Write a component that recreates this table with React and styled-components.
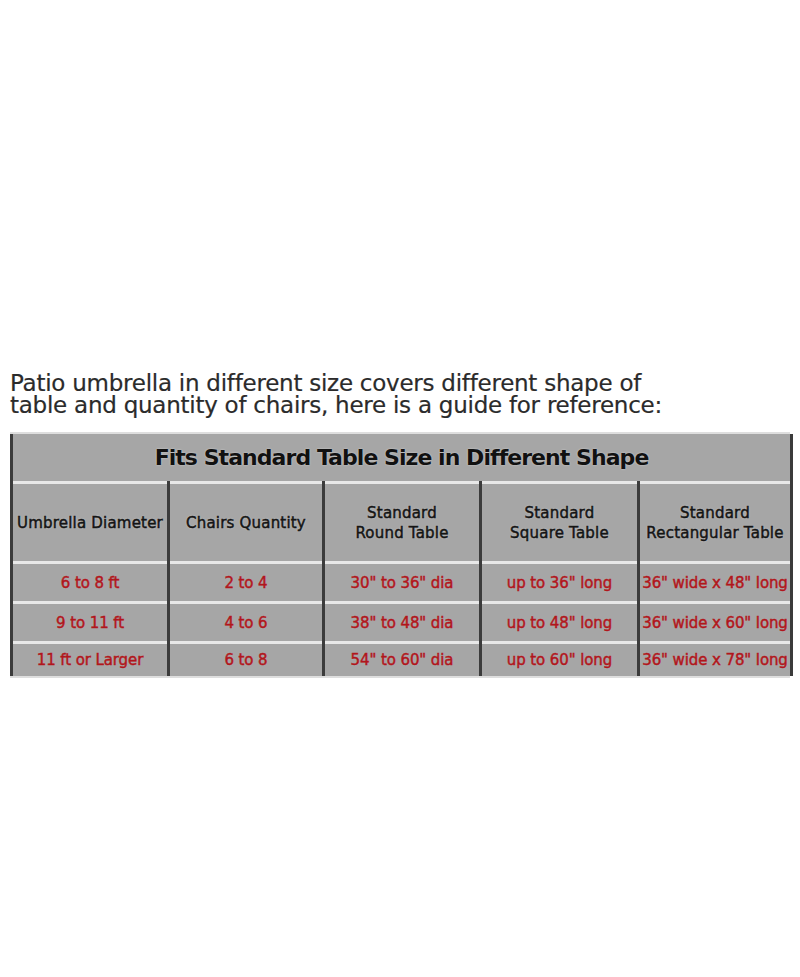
import React from "react";
import styled, { createGlobalStyle } from "styled-components";

const GlobalStyle = createGlobalStyle`
  html, body {
    margin: 0;
    padding: 0;
    background: #ffffff;
  }
  body {
    font-family: "DejaVu Sans", "Liberation Sans", sans-serif;
  }
`;

const Page = styled.div`
  width: 800px;
  height: 977px;
  padding-top: 372px;
  box-sizing: border-box;
  background: #ffffff;
`;

const Intro = styled.p`
  margin: 0 0 16px 10px;
  font-size: 23px;
  line-height: 22px;
  color: #2b2b2b;
  letter-spacing: -0.25px;
  -webkit-text-stroke: 0.2px #2b2b2b;
`;

const Chart = styled.div`
  margin-left: 10px;
  width: 783px;
`;

const Strip = styled.div`
  height: 2px;
  width: 780px;
  background: #dedede;
`;

const Body = styled.div`
  background: #3b3b3b;
  border-left: 3px solid #3b3b3b;
  border-right: 3px solid #3b3b3b;
`;

const TitleRow = styled.div`
  height: 47px;
  background: #a6a6a6;
  display: flex;
  align-items: center;
  justify-content: center;
  font-weight: bold;
  font-size: 22px;
  letter-spacing: -0.95px;
  color: #111;
  text-shadow: 0 0 2px rgba(255, 255, 255, 0.55);
`;

const Row = styled.div`
  display: grid;
  grid-template-columns: 154px 152px 154px 155px 150px;
  column-gap: 3px;
`;

const Cell = styled.div`
  height: ${(p) => p.$h}px;
  border-top: 3px solid #e8e8e8;
  background: #a6a6a6;
  display: flex;
  align-items: center;
  justify-content: center;
  text-align: center;
  font-size: 15px;
  line-height: 20px;
  letter-spacing: ${(p) => (p.$head ? "0.2px" : "-0.1px")};
  color: ${(p) => (p.$head ? "#141414" : "#b0161c")};
  -webkit-text-stroke: 0.5px ${(p) => (p.$head ? "#141414" : "#b0161c")};
  text-shadow: ${(p) =>
    p.$head ? "0 0 2px rgba(255,255,255,0.5)" : "0 0 1px rgba(255,255,255,0.3)"};
  white-space: nowrap;
`;

const headers = [
  "Umbrella Diameter",
  "Chairs Quantity",
  ["Standard", "Round Table"],
  ["Standard", "Square Table"],
  ["Standard", "Rectangular Table"],
];

const rows = [
  { h: 37, cells: ["6 to 8 ft", "2 to 4", '30" to 36" dia', 'up to 36" long', '36" wide x 48" long'] },
  { h: 37, cells: ["9 to 11 ft", "4 to 6", '38" to 48" dia', 'up to 48" long', '36" wide x 60" long'] },
  { h: 32, cells: ["11 ft or Larger", "6 to 8", '54" to 60" dia', 'up to 60" long', '36" wide x 78" long'] },
];

export default function App() {
  return (
    <Page>
      <GlobalStyle />
      <Intro>
        Patio umbrella in different size covers different shape of
        <br />
        table and quantity of chairs, here is a guide for reference:
      </Intro>
      <Chart>
        <Strip />
        <Body>
          <TitleRow>Fits Standard Table Size in Different Shape</TitleRow>
          <Row>
            {headers.map((h, i) => (
              <Cell key={i} $h={77} $head>
                {Array.isArray(h) ? (
                  <span>
                    {h[0]}
                    <br />
                    {h[1]}
                  </span>
                ) : (
                  h
                )}
              </Cell>
            ))}
          </Row>
          {rows.map((r, i) => (
            <Row key={i}>
              {r.cells.map((c, j) => (
                <Cell key={j} $h={r.h}>
                  {c}
                </Cell>
              ))}
            </Row>
          ))}
        </Body>
        <Strip />
      </Chart>
    </Page>
  );
}
